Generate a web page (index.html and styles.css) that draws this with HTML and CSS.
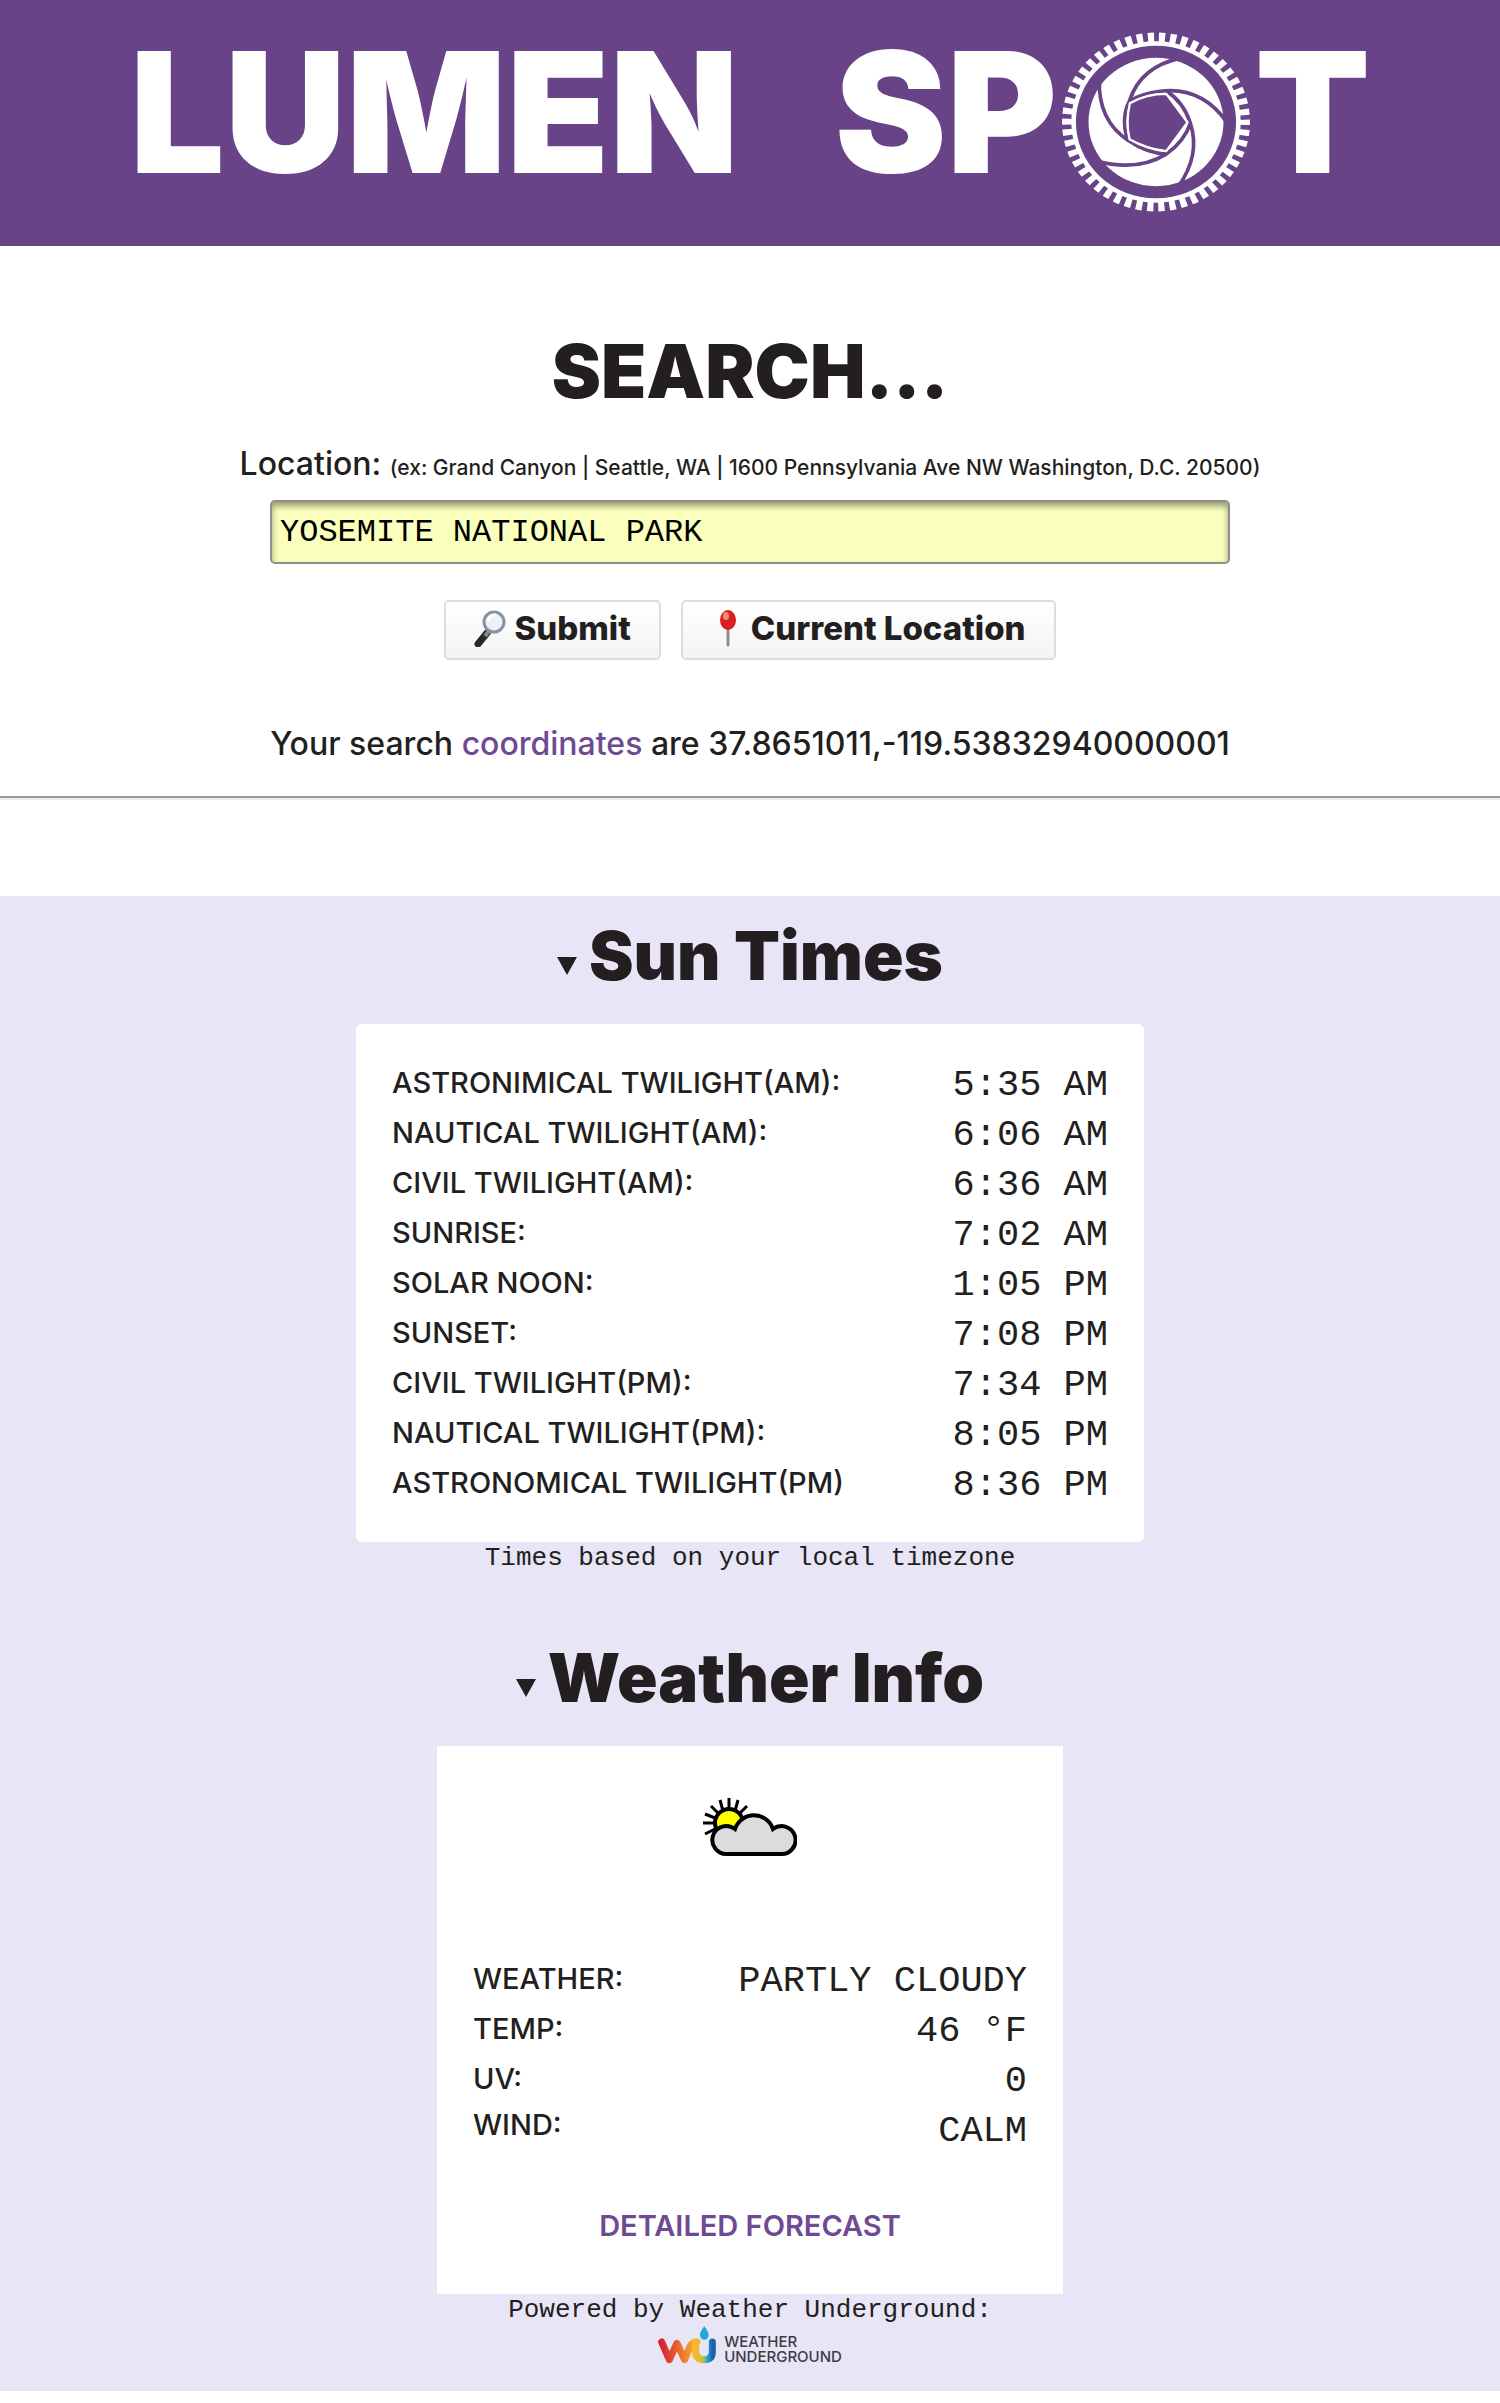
FILE: index.html
```html
<!DOCTYPE html>
<html lang="en">
<head>
<meta charset="utf-8">
<title>Lumen Spot</title>
<link rel="stylesheet" href="styles.css">
</head>
<body>
<header class="banner">
  <h1 class="logo">
    <span class="logo-text">LUMEN</span>
    <span class="logo-spot"><span class="logo-text">SP</span><svg class="aperture" viewBox="70 64 574 544" role="img" aria-label="O">
      <g fill="none" stroke="#fff">
        <g transform="translate(357 336) scale(1 .952)">
          <circle r="266" stroke-width="36" pathLength="50" stroke-dasharray=".56 .44" stroke-dashoffset=".28"/>
          <circle r="249" stroke-width="14"/>
          <circle r="204" fill="#fff" stroke="none"/>
        </g>
      </g>
      <g fill="none" stroke="#684387" stroke-width="11">
        <path d="M432 143Q310 168 277 272Q262 298 262 335T275 393"/>
        <path d="M186 205Q180 332 275 393Q328 430 388 433"/>
        <path d="M176 454Q300 487 388 433Q442 395 461 340"/>
        <path d="M425 530Q492 435 461 340Q440 275 388 242"/>
        <path d="M572 338Q496 228 370 243Q312 249 274 275"/>
      </g>
      <path d="M388 251L452 337L388 424Q325 416 277 388Q265 335 278 279Q328 251 388 251Z" fill="#684387" stroke="#fff" stroke-width="7"/>
    </svg><span class="logo-text">T</span></span>
  </h1>
</header>

<main>
  <section class="search">
    <h2 class="title">SEARCH...</h2>
    <form class="search-form">
      <label class="prompt" for="location">Location: <small class="hint">(ex: Grand Canyon | Seattle, WA | 1600 Pennsylvania Ave NW Washington, D.C. 20500)</small></label>
      <input class="field" id="location" type="text" value="YOSEMITE NATIONAL PARK">
      <div class="actions">
        <button class="button" type="submit"><svg class="emoji" viewBox="0 0 32 38" aria-hidden="true">
          <path d="M13 24L4 35" stroke="#26282b" stroke-width="7" stroke-linecap="round"/>
          <path d="M15 22L11 27" stroke="#85898d" stroke-width="4"/>
          <circle cx="20" cy="13" r="10" fill="#eef1f5" stroke="#8494a5" stroke-width="3"/>
          <path d="M14 12A7 7 0 0 1 22 6" stroke="#fff" stroke-width="3" fill="none"/>
        </svg>Submit</button>
        <button class="button" type="button"><svg class="emoji" viewBox="0 0 32 38" aria-hidden="true">
          <path d="M17 17V36" stroke="#968b88" stroke-width="3" stroke-linecap="round"/>
          <ellipse cx="17" cy="11" rx="8" ry="10" fill="#d8201f"/>
          <ellipse cx="15" cy="7" rx="3" ry="4" fill="#f68a83"/>
        </svg>Current Location</button>
      </div>
    </form>
    <p class="result">Your search <a class="link" href="#coordinates">coordinates</a> are 37.8651011,-119.53832940000001</p>
  </section>

  <div class="panels">
    <details class="panel" open>
      <summary class="heading"><svg class="marker" viewBox="0 0 20 18" aria-hidden="true"><path d="M0 0H20L10 18Z"/></svg>Sun Times</summary>
      <div class="card card-sun">
        <table class="facts">
          <tr><th scope="row">ASTRONIMICAL TWILIGHT(AM):</th><td>5:35 AM</td></tr>
          <tr><th scope="row">NAUTICAL TWILIGHT(AM):</th><td>6:06 AM</td></tr>
          <tr><th scope="row">CIVIL TWILIGHT(AM):</th><td>6:36 AM</td></tr>
          <tr><th scope="row">SUNRISE:</th><td>7:02 AM</td></tr>
          <tr><th scope="row">SOLAR NOON:</th><td>1:05 PM</td></tr>
          <tr><th scope="row">SUNSET:</th><td>7:08 PM</td></tr>
          <tr><th scope="row">CIVIL TWILIGHT(PM):</th><td>7:34 PM</td></tr>
          <tr><th scope="row">NAUTICAL TWILIGHT(PM):</th><td>8:05 PM</td></tr>
          <tr><th scope="row">ASTRONOMICAL TWILIGHT(PM)</th><td>8:36 PM</td></tr>
        </table>
      </div>
      <p class="note">Times based on your local timezone</p>
    </details>

    <details class="panel" open>
      <summary class="heading"><svg class="marker" viewBox="0 0 20 18" aria-hidden="true"><path d="M0 0H20L10 18Z"/></svg>Weather Info</summary>
      <div class="card card-weather">
        <svg class="sky" viewBox="0 0 94 60" role="img" aria-label="Partly cloudy">
          <path d="M26 0V12M17 2L20 13M35 2L32 13M8 8L16 16M44 8L37 15M2 16L12 20M0 25H11M2 36L12 31" stroke="#000" stroke-width="3"/>
          <circle cx="26" cy="25" r="14" fill="#ff0" stroke="#000" stroke-width="4"/>
          <path d="M24 56A14 14 0 1 1 32 31A20 20 0 0 1 70 31A14 14 0 1 1 77 56Z" fill="#dcdcdc" stroke="#000" stroke-width="4"/>
        </svg>
        <table class="facts">
          <tr><th scope="row">WEATHER:</th><td>PARTLY CLOUDY</td></tr>
          <tr><th scope="row">TEMP:</th><td>46 °F</td></tr>
          <tr><th scope="row">UV:</th><td>0</td></tr>
          <tr><th scope="row">WIND:</th><td>CALM</td></tr>
        </table>
        <a class="link forecast" href="#forecast">DETAILED FORECAST</a>
      </div>
      <p class="note">Powered by Weather Underground:</p>
      <a class="credit" href="#weather-underground">
        <svg class="credit-mark" viewBox="0 0 174 114" aria-hidden="true">
          <defs>
            <linearGradient id="warm"><stop offset="0" stop-color="#d9232e"/><stop offset=".6" stop-color="#ee7a30"/><stop offset="1" stop-color="#f8b62b"/></linearGradient>
            <linearGradient id="cool"><stop offset="0" stop-color="#f8b62b"/><stop offset=".45" stop-color="#c3c43e"/><stop offset=".7" stop-color="#25a4d8"/><stop offset="1" stop-color="#1b62ae"/></linearGradient>
          </defs>
          <g fill="none" stroke-width="21" stroke-linecap="round" stroke-linejoin="round">
            <path d="M11 48L34 101L57 52L80 101L97 60Q104 48 117 48" stroke="url(#warm)"/>
            <path d="M113 48V78Q114 101 138 101Q163 101 163 78V48" stroke="url(#cool)"/>
          </g>
          <path d="M139 0Q153 20 152 28A13 13 0 0 1 126 28Q125 20 139 0Z" fill="#20a7dc"/>
        </svg>
        <span class="credit-name">WEATHER<br>UNDERGROUND</span>
      </a>
    </details>
  </div>
</main>
</body>
</html>
```
FILE: styles.css
```css
* { box-sizing: border-box; }

body {
  margin: 0;
  background: #fff;
  color: #231f20;
  font: 500 32px/40px Inter, sans-serif;
}

h1, h2, p { margin: 0; }

.banner {
  display: flex;
  justify-content: center;
  padding: 32px 0 34px;
  background: #684387;
}

.logo {
  display: flex;
  align-items: center;
  gap: 96px;
  color: #fff;
  font-size: 168px;
  font-weight: 900;
  line-height: 160px;
}

.logo-text { padding-bottom: 20px; }

.logo-spot {
  display: flex;
  align-items: center;
  gap: 4px;
}

.aperture {
  width: 190px;
  height: 180px;
}

.search {
  display: flex;
  flex-direction: column;
  align-items: center;
  padding: 80px 0 32px;
  border-bottom: 2px solid #999;
  box-shadow: 0 2px #eee;
  text-align: center;
}

.title {
  font-size: 74px;
  font-weight: 900;
  line-height: 90px;
}

.search-form {
  display: flex;
  flex-direction: column;
  align-items: center;
  width: 100%;
  padding-top: 28px;
}

.hint { font-size: 21px; }

.field {
  width: 64%;
  height: 64px;
  margin-top: 12px;
  padding: 0 8px;
  border: 2px solid #90908a;
  border-radius: 5px;
  background: #faffbd;
  box-shadow: inset 0 4px 6px rgba(0, 0, 0, .4);
  color: #000;
  font: 32px "Liberation Mono", monospace;
}

.actions {
  display: flex;
  gap: 20px;
  padding: 36px 0 64px;
}

.button {
  display: flex;
  align-items: center;
  gap: 8px;
  height: 60px;
  padding: 0 28px 4px;
  border: 2px solid #ddd;
  border-radius: 5px;
  background: linear-gradient(#fff, #f4f4f4);
  color: #231f20;
  font: 800 33px Inter, sans-serif;
}

.emoji {
  width: 32px;
  height: 38px;
  fill: none;
}

.link {
  color: #6f4a93;
  text-decoration: none;
}

.panels {
  margin: 98px 0 13px;
  padding: 20px 0 27px;
  background: #e8e5f6;
}

.panel { text-align: center; }
.panel + .panel { padding-top: 64px; }

.heading {
  display: flex;
  align-items: center;
  justify-content: center;
  gap: 12px;
  font-size: 67px;
  font-weight: 900;
  line-height: 80px;
  list-style: none;
}

.marker {
  width: 20px;
  height: 18px;
  margin-top: 20px;
  fill: #231f20;
}

.card {
  width: 788px;
  max-width: 100%;
  margin: 28px auto 0;
  padding: 34px 36px;
  border-radius: 6px;
  background: #fff;
}

.card-weather {
  width: 626px;
  padding: 52px 36px 48px;
  border-radius: 0;
}

.facts {
  width: 100%;
  border-collapse: collapse;
}

.facts th,
.facts td {
  padding: 0;
  font-weight: 500;
  line-height: 50px;
  vertical-align: top;
}

.facts th {
  font-size: 29px;
  text-align: left;
}

.facts td {
  padding-top: 4px;
  font-family: "Liberation Mono", monospace;
  font-size: 37px;
  line-height: 46px;
  text-align: right;
}

.card-weather tr:last-child th { line-height: 42px; }

.sky {
  display: block;
  width: 94px;
  height: 60px;
  margin: 0 auto 96px;
}

.forecast {
  display: block;
  padding-top: 52px;
  font-size: 29px;
  font-weight: 600;
}

.note {
  font: 26px/32px "Liberation Mono", monospace;
}

.credit {
  display: flex;
  align-items: flex-end;
  justify-content: center;
  gap: 8px;
  color: #3d3d45;
  text-decoration: none;
}

.credit-mark {
  width: 58px;
  height: 38px;
}

.credit-name {
  font-size: 15px;
  line-height: 15px;
  text-align: left;
}
```
